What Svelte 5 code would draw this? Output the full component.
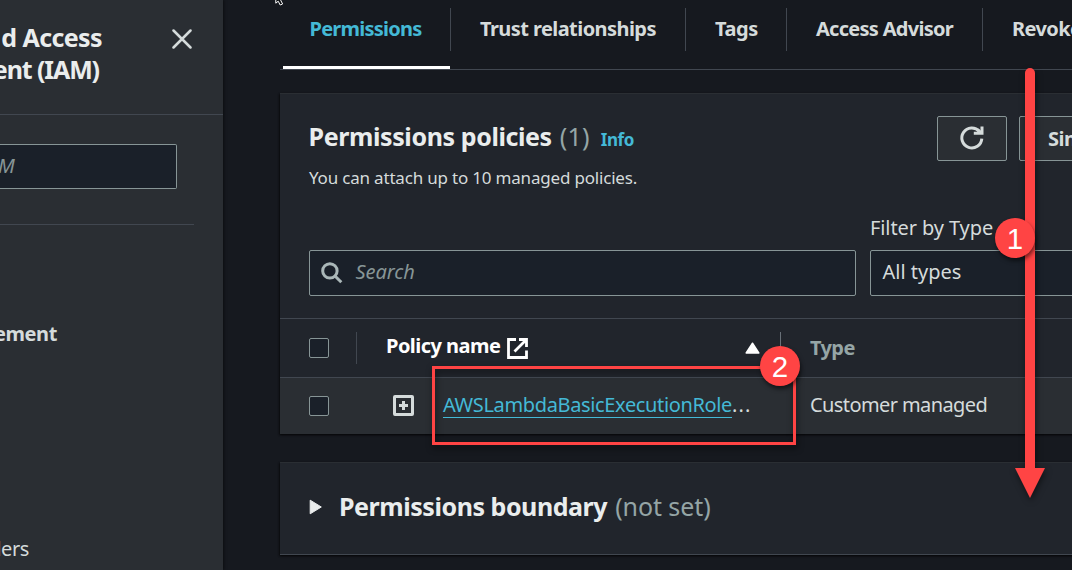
<script>
  const tabs = [
    { label: 'Permissions', width: 168, spacing: -0.76, active: true },
    { label: 'Trust relationships', width: 235, spacing: -0.57 },
    { label: 'Tags', width: 101, spacing: -0.4 },
    { label: 'Access Advisor', width: 196, spacing: -0.72 },
    { label: 'Revoke', width: 140, spacing: -0.6 }
  ];
</script>

<div class="app">
  <aside>
    <header class="side-head">
      <h2>d Access<br /><span class="line2">ent (IAM)</span></h2>
      <svg class="close" width="20" height="20" viewBox="0 0 20 20"><path d="M1.5 1.5 18.5 18.5M18.5 1.5 1.5 18.5" /></svg>
    </header>
    <div class="side-search"><div class="side-input">M</div></div>
    <div class="side-rule"></div>
    <nav>
      <strong>ement</strong>
      <a class="nav-link" href="#providers">ders</a>
    </nav>
  </aside>

  <main>
    <div class="tabs">
      {#each tabs as tab}
        <div class="tab" class:active={tab.active} style="width:{tab.width}px;letter-spacing:{tab.spacing}px">{tab.label}</div>
      {/each}
    </div>

    <section class="panel policies">
      <div class="panel-head">
        <div class="titles">
          <h1><span class="h">Permissions policies</span><span class="count">(1)</span><a class="info" href="#info">Info</a></h1>
          <p>You can attach up to 10 managed policies.</p>
        </div>
        <div class="actions">
          <button class="refresh" aria-label="Refresh">
            <svg width="26" height="26" viewBox="0 0 26 26"><path d="M22.8 13.6A10 10 0 1 1 20.4 6.4" /><path d="M23 1.6V8.2H14.8" /><path d="M18.5 4.5 22 7.8" /></svg>
          </button>
          <button class="simulate">Sim</button>
        </div>
      </div>

      <div class="filters">
        <div class="field search">
          <svg width="22" height="22" viewBox="0 0 22 22"><circle cx="8.9" cy="8.9" r="7.2" /><path d="M14 14 20.3 20.3" /></svg>
          <em>Search</em>
        </div>
        <div class="type-filter">
          <span class="label">Filter by Type</span>
          <div class="field select">All types</div>
        </div>
      </div>

      <div class="row thead">
        <div class="c-check"><span class="box"></span></div>
        <div class="c-name">
          <b>Policy name</b>
          <svg class="ext" width="21" height="21" viewBox="0 0 21 21"><path d="M9 1.5H1.5V19.5H19.5V12.5" /><path d="M12 1.5H19.5V9M19.5 1.5 7.5 13.5" /></svg>
          <svg class="sort" width="15" height="12" viewBox="0 0 15 12"><path d="M7.5 1.2 13.8 11H1.2Z" /></svg>
        </div>
        <div class="c-type">Type</div>
      </div>
      <div class="row body">
        <div class="c-check"><span class="box"></span></div>
        <div class="c-link">
          <svg width="21" height="21" viewBox="0 0 21 21"><rect x="1.5" y="1.5" width="18" height="18" rx=".5" /><path d="M10.5 6V15M6 10.5H15" /></svg>
          <div class="policy"><a href="#policy">AWSLambdaBasicExecutionRole</a><span>...</span></div>
        </div>
        <div class="c-type">Customer managed</div>
      </div>
    </section>

    <section class="panel boundary">
      <svg width="14" height="16" viewBox="0 0 14 16"><path d="M1.2 1.2 12.3 8 1.2 14.8Z" /></svg>
      <h1><span class="b">Permissions boundary</span><span class="unset">(not set)</span></h1>
    </section>
  </main>

  <svg class="cursor" width="12" height="8" viewBox="0 0 12 8"><path d="M.8-10V3.2L3.2 1.2 5.2 5 7.6 4 5.6 0V-10Z" /></svg>

  <svg class="arrow" width="50" height="450" viewBox="0 0 50 450">
    <path d="M20 13a5 5 0 0 1 10 0V408H40L25 438 10 408H20Z" />
  </svg>
  <div class="highlight"></div>
  <div class="badge one">1</div>
  <div class="badge two">2</div>
</div>

<style>
  :global(body) { margin: 0; overflow: hidden; background: #16191f; }
  * { box-sizing: border-box; }
  .app {
    position: relative; display: flex; width: 1072px; height: 570px; overflow: hidden;
    background: #16191f; color: #d5dbdb; font-family: "Noto Sans", sans-serif; font-size: 20px; line-height: 28px; white-space: nowrap;
  }
  h1, h2, p { margin: 0; }
  a { text-decoration: none; color: #44b9d6; }
  svg { display: block; flex: none; fill: none; stroke: #d5dbdb; }

  aside { width: 223px; flex: none; background: #2a2e33; overflow: hidden; box-shadow: 1px 0 3px rgba(0, 0, 0, .5); }
  .side-head { height: 115px; padding: 21px 31px 0 0; display: flex; justify-content: space-between; border-bottom: 1px solid #414750; }
  h2 { width: 102px; font-size: 25px; line-height: 32px; color: #eaeded; letter-spacing: -.6px; display: flex; flex-direction: column; align-items: flex-end; }
  h2 br { display: none; }
  .line2 { letter-spacing: -1.1px; margin-right: 3px; }
  .close { margin-top: 8px; stroke-width: 2.5; stroke-linecap: round; }
  .side-search { padding-top: 29px; }
  .side-input { width: 177px; height: 45px; line-height: 41px; border: 1px solid #879596; border-left: 0; border-radius: 0 2px 2px 0; background: #1a2029; color: #879596; font-style: italic; text-indent: -2px; }
  .side-rule { width: 194px; height: 36px; border-bottom: 1px solid #414750; }
  nav { display: flex; flex-direction: column; padding-top: 95px; width: 57px; align-items: flex-end; }
  nav strong { letter-spacing: -.4px; }
  .nav-link { color: #d5dbdb; margin: 187px 28px 0 0; letter-spacing: -.4px; }

  main { flex: 1; min-width: 0; padding-left: 57px; overflow: hidden; }
  .tabs { display: flex; height: 70px; width: 900px; padding-left: 3px; border-bottom: 1px solid #414750; font-weight: 700; }
  .tab { position: relative; flex: none; height: 69px; padding: 15px 0 0 29px; }
  .tab:first-child { padding-left: 26.5px; }
  .tab::after { content: ""; position: absolute; right: 0; top: 8px; height: 43px; width: 1px; background: #414750; }
  .tab.active { color: #44b9d6; }
  .tab.active::before { content: ""; position: absolute; left: 0; right: 1px; bottom: 0; height: 3px; background: #fff; }

  .panel { width: 850px; background: #21252c; border-top: 1px solid #2a2e33; box-shadow: 0 1px 2px rgba(0, 0, 0, .6), -1px 1px 2px rgba(0, 0, 0, .4); }
  .policies { margin-top: 23px; height: 341px; }
  .panel-head { display: flex; height: 121px; padding: 22px 0 0 28px; }
  .titles { width: 629px; flex: none; }
  h1 { display: flex; align-items: baseline; font-size: 25px; line-height: 40px; color: #eaeded; }
  .h { margin-left: .6px; letter-spacing: -.4px; }
  .count { margin-left: 8px; font-weight: 400; color: #95a5a6; letter-spacing: .2px; }
  .info { margin-left: 11px; font-size: 17px; letter-spacing: -.4px; }
  p { margin-top: 4px; margin-left: 1px; font-size: 17px; letter-spacing: -.19px; }
  .actions { display: flex; gap: 12px; }
  button { height: 45px; padding: 0; border: 1px solid #879596; border-radius: 2px; background: #2a2e33; color: #d5dbdb; font: 700 20px/40px "Noto Sans", sans-serif; }
  .refresh { width: 70px; display: flex; align-items: center; justify-content: center; }
  .refresh svg { stroke-width: 3; margin: -1px 1px 0 0; }
  .simulate { width: 140px; text-align: left; padding-left: 28px; letter-spacing: -.5px; }

  .filters { display: flex; align-items: flex-end; gap: 14px; height: 81px; padding-left: 29px; }
  .field { height: 46px; border: 1px solid #879596; border-radius: 2px; background: #1a2029; line-height: 42px; }
  .search { width: 547px; flex: none; display: flex; padding-left: 11px; color: #879596; }
  .search svg { margin-top: 11px; stroke: #aab7b8; stroke-width: 3; }
  .search em { margin-left: 12.5px; letter-spacing: -.05px; }
  .label { display: block; height: 36px; line-height: 28px; letter-spacing: -.1px; }
  .select { width: 220px; padding-left: 11.5px; }

  .row { display: flex; border-top: 1px solid #414750; }
  .thead { margin-top: 22px; height: 59px; }
  .body { height: 57px; background: #2a2e33; }
  .c-check { width: 77px; flex: none; padding: 18px 0 0 29px; }
  .thead .c-check { border: 0; padding-top: 19px; position: relative; }
  .thead .c-check::after { content: ""; position: absolute; right: 0; top: 13px; width: 1px; height: 32px; background: #414750; }
  .box { display: block; width: 20px; height: 20px; border: 1.5px solid #879596; border-radius: 2px; background: #1a2029; }
  .c-name { position: relative; width: 424px; flex: none; display: flex; padding: 13px 0 0 29px; color: #fff; }
  .c-name::after { content: ""; position: absolute; right: 0; top: 13px; width: 1px; height: 32px; background: #687078; }
  .c-name b { width: 114px; letter-spacing: -.54px; }
  .ext { margin: 6px 0 0 7px; stroke: #fff; stroke-width: 2.8; }
  .sort { margin: 10px 0 0 217px; fill: #fff; stroke: #fff; stroke-width: 1.5; stroke-linejoin: round; }
  .c-link { width: 424px; flex: none; display: flex; padding: 13px 0 0 36px; }
  .c-link svg { margin-top: 4px; stroke-width: 3; }
  .policy { margin-left: 29px; display: flex; }
  .policy a { height: 27px; border-bottom: 1px solid #44b9d6; letter-spacing: -.36px; }
  .policy span { letter-spacing: 1.2px; }
  .c-type { padding: 13px 0 0 29px; letter-spacing: -.6px; }
  .thead .c-type { padding-top: 15px; font-weight: 700; color: #95a5a6; letter-spacing: -.6px; }

  .boundary { margin-top: 28px; height: 93px; border-bottom: 1px solid #414750; display: flex; padding: 23px 0 0 29px; }
  .boundary svg { margin-top: 13px; fill: #eaeded; stroke: #eaeded; stroke-width: 1; stroke-linejoin: round; }
  .boundary h1 { margin-left: 16px; }
  .b { letter-spacing: -.45px; }
  .unset { margin-left: 8px; font-weight: 400; color: #95a5a6; letter-spacing: -.08px; }

  .cursor { position: absolute; left: 275px; top: 0; fill: #0b0d10; stroke: #fff; stroke-width: 1; }
  .arrow { position: absolute; left: 1005px; top: 60px; fill: #ff4444; stroke: none; filter: drop-shadow(1px 3px 3px rgba(0, 0, 0, .5)); }
  .highlight { position: absolute; left: 432px; top: 366px; width: 364px; height: 79px; border: 3px solid #ff4444; filter: drop-shadow(1px 3px 3px rgba(0, 0, 0, .6)); }
  .badge { position: absolute; width: 40px; height: 40px; border-radius: 50%; background: #ff4444; color: #fff; font: 29.5px/41px "Liberation Sans", sans-serif; text-align: center; box-shadow: 1px 3px 4px rgba(0, 0, 0, .55); }
  .one { left: 995px; top: 218px; }
  .two { left: 760px; top: 346px; }
</style>
